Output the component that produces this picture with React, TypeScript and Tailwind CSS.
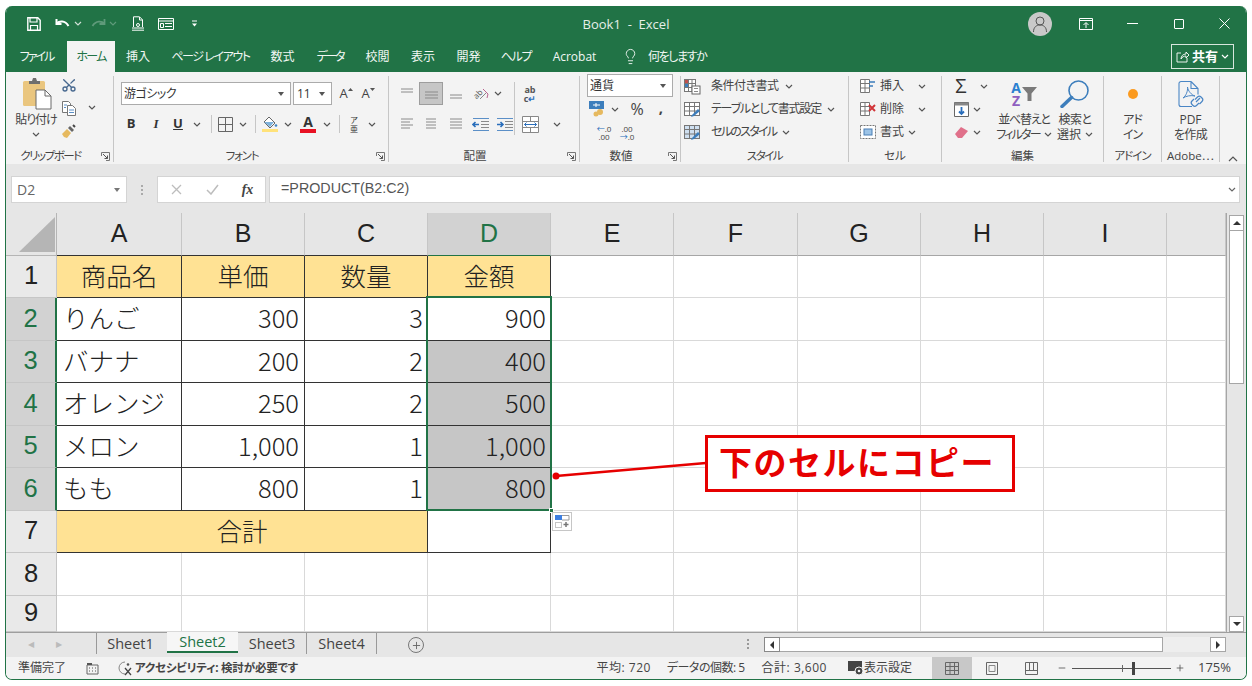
import React from "react";
import { Scissors, Lightbulb, Plus, Minus } from "lucide-react";

const Chev = ({ color = "#555" }: { color?: string }) => (
	<svg width="8" height="5" viewBox="0 0 8 5" className="shrink-0">
		<path d="M1 1l3 3 3-3" fill="none" stroke={color} strokeWidth="1.2" />
	</svg>
);

const Slot = ({ w, children, className = "" }: { w: string; children?: React.ReactNode; className?: string }) => (
	<div className={`flex items-center justify-center shrink-0 ${w} ${className}`}>{children}</div>
);

const Launcher = () => (
	<svg width="9" height="9" viewBox="0 0 9 9" className="shrink-0">
		<path d="M.5 4V.5H8.5V8.5H5" fill="none" stroke="#777" />
		<path d="M2 2l4.5 4.5M6.5 3.5v3h-3" fill="none" stroke="#555" />
	</svg>
);

const Group = ({
	w,
	label,
	launcher,
	track = "",
	children,
}: {
	w: string;
	label: string;
	launcher?: boolean;
	track?: string;
	children: React.ReactNode;
}) => (
	<div className={`flex flex-col h-[86px] mt-[4px] border-r border-[#c6c6c6] shrink-0 ${w}`}>
		<div className="h-[73px]">{children}</div>
		<div className="h-[13px] pt-[1px] flex items-center text-[11.5px] leading-[12px] text-[#444]">
			<div className={`flex-1 text-center whitespace-nowrap ${track}`}>{label}</div>
			{launcher && (
				<div className="w-[18px] flex justify-center pl-[2px]">
					<Launcher />
				</div>
			)}
		</div>
	</div>
);

const Lines = ({ ys, x1 = 2, x2 = 14, blue }: { ys: number[]; x1?: number; x2?: number; blue?: boolean }) => (
	<svg width="16" height="14" viewBox="0 0 16 14">
		{ys.map((y, i) => (
			<path key={i} d={`M${x1} ${y}H${i % 2 && x2 === 14 && blue ? 11 : x2}`} stroke="#8a8a8a" strokeWidth="1" />
		))}
	</svg>
);

const Indent = ({ flip }: { flip?: boolean }) => (
	<svg width="18" height="15" viewBox="0 0 18 15">
		<path d="M1 1.5H17M1 13.5H17" stroke="#5b8fc7" />
		<path d="M9 4.5H17M9 7.5H17M9 10.5H17" stroke="#8a8a8a" />
		<path d={flip ? "M1 7.5H7M4.5 5l2.5 2.5L4.5 10" : "M7 7.5H1M3.5 5L1 7.5 3.5 10"} fill="none" stroke="#2a6ebb" strokeWidth="1.6" />
	</svg>
);

const Paste = () => (
	<svg width="32" height="33" viewBox="0 0 32 33">
		<rect x="1" y="4" width="22" height="25" rx="1.5" fill="#eac67f" />
		<path d="M7 4h3l1-3h3l1 3h3v3H7z" fill="#6e6e6e" />
		<path d="M14 13h9l6 6v13H14z" fill="#fff" stroke="#6a6a6a" />
		<path d="M23 13v6h6" fill="none" stroke="#6a6a6a" />
	</svg>
);

const CopyIcon = () => (
	<svg width="16" height="17" viewBox="0 0 16 17">
		<path d="M1.5 1.5h6l2 2v9h-8z" fill="#fff" stroke="#777" />
		<path d="M6.5 5.5h5l3 3v7h-8z" fill="#fff" stroke="#777" />
		<path d="M3 5h3M3 7.5h2M8 10h5M8 12.5h5" stroke="#5b8fc7" />
	</svg>
);

const Brush = () => (
	<svg width="16" height="16" viewBox="0 0 16 16">
		<path d="M1 11l5-5 4 4-4 5-3-1z" fill="#e6b95f" />
		<path d="M7 5l2-2 4 4-2 2z" fill="#666" />
		<path d="M12 2l2 2" stroke="#444" strokeWidth="2" />
	</svg>
);

const Bucket = () => (
	<div className="flex flex-col items-center">
		<svg width="16" height="13" viewBox="0 0 16 13">
			<path d="M7 1l6 6-5 5-6-6z" fill="#fff" stroke="#666" />
			<path d="M2 6h10l-4 5z" fill="#7fb2dc" />
			<circle cx="14" cy="9.5" r="1.3" fill="#3f87c6" />
		</svg>
		<div className="w-[16px] h-[3px] bg-[#ffe27a]" />
	</div>
);

const SmallTable = ({ tint = "#fff" }: { tint?: string }) => (
	<svg width="18" height="16" viewBox="0 0 18 16">
		<rect x="1.5" y="1.5" width="15" height="13" fill={tint} stroke="#777" />
		<path d="M1.5 5.5h15M1.5 10h15M6.5 1.5v13M11.5 1.5v13" stroke="#777" />
		<path d="M9 14l6-6 2 2-6 5-3 1z" fill="#3d7ebc" />
	</svg>
);

const Cond = () => (
	<svg width="18" height="17" viewBox="0 0 18 17">
		<rect x="1.5" y="1.5" width="11" height="12" fill="#fff" stroke="#777" />
		<path d="M1.5 5.5h11M1.5 9.5h11M5.5 1.5v12M9 1.5v12" stroke="#777" />
		<rect x="2" y="2" width="3" height="3" fill="#c0504d" />
		<rect x="2" y="6" width="3" height="3" fill="#3d7ebc" />
		<rect x="9" y="8" width="8" height="8" fill="#fff" stroke="#666" />
		<path d="M11 10.5h4M11 13.5h4" stroke="#888" />
	</svg>
);

const CellOp = ({ kind }: { kind: "ins" | "del" | "fmt" }) => (
	<svg width="18" height="16" viewBox="0 0 18 16">
		{kind === "fmt" ? (
			<>
				<rect x="1.5" y="1.5" width="15" height="13" fill="#fff" stroke="#777" strokeDasharray="2 1" />
				<rect x="5" y="5" width="8" height="6" fill="#9cc3e6" stroke="#4a7fb5" />
			</>
		) : (
			<>
				<path d="M1.5 1.5h9v13h-9zM1.5 5.5h9M1.5 10h9M6 1.5v13" fill="#fff" stroke="#777" />
				{kind === "ins" ? (
					<path d="M10 4h6M10 8h4" stroke="#3d7ebc" strokeWidth="1.5" />
				) : (
					<path d="M10 4l6 6M16 4l-6 6" stroke="#d13438" strokeWidth="2" />
				)}
			</>
		)}
	</svg>
);

const Row = ({ children, className = "" }: { children: React.ReactNode; className?: string }) => (
	<div className={`flex items-center h-[20px] ${className}`}>{children}</div>
);

const Ribbon = () => (
	<div className="flex h-[92px] bg-[#f3f3f3] text-[12px] text-[#444] shrink-0">
		{/* clipboard */}
		<Group w="w-[108px]" label="クリップボード" launcher track="tracking-[-1.5px]">
			<div className="flex">
				<div className="w-[48px] ml-[6px] flex flex-col items-center">
					<div className="h-[36px] pt-[1px] pl-[4px]">
						<Paste />
					</div>
					<div className="leading-[15px] whitespace-nowrap tracking-[-1px]">貼り付け</div>
					<div className="h-[15px] flex items-center">
						<Chev />
					</div>
				</div>
				<div className="w-[16px] ml-[1px] flex flex-col gap-[5px]">
					<div className="h-[18px] flex items-center justify-center">
						<Scissors size={16} color="#47688f" className="-rotate-90" />
					</div>
					<div className="h-[18px] flex items-center justify-center">
						<CopyIcon />
					</div>
					<div className="h-[18px] flex items-center justify-center">
						<Brush />
					</div>
				</div>
				<div className="ml-[11px] mt-[29px]">
					<Chev />
				</div>
			</div>
		</Group>
		{/* font */}
		<Group w="w-[275px]" label="フォント" launcher track="tracking-[-1.2px]">
			<div className="pl-[7px] pt-[6px]">
				<div className="flex items-center h-[23px]">
					<div className="w-[170px] h-[23px] bg-white border border-[#ababab] flex items-center justify-between px-[2px] pr-[6px] text-[12px] text-[#333]">
						<span className="tracking-[-.5px]">游ゴシック</span>
						<svg width="6" height="4" viewBox="0 0 6 4">
							<path d="M0 0h6L3 4z" fill="#555" />
						</svg>
					</div>
					<div className="w-[39px] h-[23px] ml-[2px] bg-white border border-[#ababab] flex items-center justify-between px-[3px] pr-[6px] text-[#333]">
						11
						<svg width="6" height="4" viewBox="0 0 6 4">
							<path d="M0 0h6L3 4z" fill="#555" />
						</svg>
					</div>
					<Slot w="w-[22px] ml-[3px]">
						<span className="text-[13px]">A</span>
						<svg width="5" height="3" viewBox="0 0 5 3" className="-mt-[9px]">
							<path d="M0 3h5L2.500 0z" fill="#555" />
						</svg>
					</Slot>
					<Slot w="w-[22px]">
						<span className="text-[13px]">A</span>
						<svg width="5" height="3" viewBox="0 0 5 3" className="-mt-[9px]">
							<path d="M0 0h5L2.500 3z" fill="#555" />
						</svg>
					</Slot>
				</div>
				<div className="flex items-center h-[22px] mt-[8px] text-[#333]">
					<Slot w="w-[20px]" className="font-bold text-[13px]">B</Slot>
					<Slot w="w-[30px]" className="italic font-bold text-[13px] font-['Liberation_Serif',serif]">I</Slot>
					<Slot w="w-[14px]" className="font-bold text-[13px] underline">U</Slot>
					<Slot w="w-[24px]"><Chev /></Slot>
					<Slot w="w-[4px]"><div className="w-px h-[18px] bg-[#c6c6c6]" /></Slot>
					<Slot w="w-[24px]">
						<svg width="15" height="15" viewBox="0 0 15 15">
							<path d="M.5.5h14v14H.5zM7.5.5v14M.5 7.5h14" fill="none" stroke="#666" />
						</svg>
					</Slot>
					<Slot w="w-[12px]"><Chev /></Slot>
					<Slot w="w-[12px]"><div className="w-px h-[18px] bg-[#c6c6c6]" /></Slot>
					<Slot w="w-[18px]"><Bucket /></Slot>
					<Slot w="w-[18px]"><Chev /></Slot>
					<Slot w="w-[22px]">
						<div className="flex flex-col items-center leading-[12px]">
							<span className="text-[14px] font-bold text-[#333]">A</span>
							<div className="w-[16px] h-[4px] mt-[1px] bg-[#e81123]" />
						</div>
					</Slot>
					<Slot w="w-[16px]"><Chev /></Slot>
					<Slot w="w-[8px]"><div className="w-px h-[18px] bg-[#c6c6c6]" /></Slot>
					<Slot w="w-[22px]">
						<div className="flex flex-col items-center text-[8px] leading-[9px]">
							<span>ア</span>
							<span>亜</span>
						</div>
					</Slot>
					<Slot w="w-[14px]"><Chev /></Slot>
				</div>
			</div>
		</Group>
		{/* alignment */}
		<Group w="w-[191px]" label="配置" launcher>
			<div className="flex pt-[6px]">
				<div className="pl-[6px] w-[128px]">
					<div className="flex items-center h-[23px]">
						<Slot w="w-[24px]"><Lines ys={[2, 5]} /></Slot>
						<Slot w="w-[24px] h-[23px] bg-[#c6c6c6] border border-[#9d9d9d]"><Lines ys={[5, 8, 11]} x2={15} /></Slot>
						<Slot w="w-[25px]"><Lines ys={[8, 11]} /></Slot>
						<Slot w="w-[26px]" className="gap-0">
							<span className="text-[8px] leading-[10px] -rotate-45 -mr-[3px] text-[#555]">ab</span>
							<svg width="10" height="14" viewBox="0 0 10 14">
								<path d="M1 12L8 5" stroke="#888" />
								<path d="M4 2l5 5-1 4" fill="none" stroke="#b9648f" />
							</svg>
						</Slot>
						<Slot w="w-[8px]"><Chev /></Slot>
					</div>
					<div className="flex items-center h-[22px] mt-[8px]">
						<Slot w="w-[24px]"><Lines ys={[2, 5, 8, 11]} x2={14} blue /></Slot>
						<Slot w="w-[24px]"><Lines ys={[2, 5, 8, 11]} x1={3} x2={13} /></Slot>
						<Slot w="w-[25px]"><Lines ys={[2, 5, 8, 11]} x1={2} x2={14} /></Slot>
						<Slot w="w-[25px]"><Indent /></Slot>
						<Slot w="w-[24px]"><Indent flip /></Slot>
					</div>
				</div>
				<div className="border-l border-[#c6c6c6] h-[53px] ml-[-3px]">
					<div className="flex items-center h-[23px] pl-[7px] text-[9px] leading-[9px] font-bold text-[#555]">
						<div className="w-[16px] text-center">
							ab
							<br />
							c<span className="text-[#2a6ebb]">↵</span>
						</div>
					</div>
					<div className="flex items-center h-[22px] mt-[8px] pl-[7px]">
						<svg width="17" height="17" viewBox="0 0 17 17">
							<path d="M.5.5h16v16H.5zM.5 5.5h16M.5 11.5h16M8.500.5v5M8.500 11.500v5" fill="#fff" stroke="#888" />
							<rect x="1" y="6" width="15" height="5" fill="#fff" />
							<path d="M2.500 8.500h12M4.500 6.500l-2 2 2 2M12.500 6.500l2 2-2 2" fill="none" stroke="#2a6ebb" />
						</svg>
						<div className="ml-[14px]">
							<Chev />
						</div>
					</div>
				</div>
			</div>
		</Group>
		{/* number */}
		<Group w="w-[101px]" label="数値" launcher>
			<div className="pl-[7px] -mt-[2px]">
				<div className="w-[86px] h-[23px] bg-white border border-[#ababab] flex items-center justify-between pl-[2px] pr-[6px] text-[#333]">
					通貨
					<svg width="6" height="4" viewBox="0 0 6 4">
						<path d="M0 0h6L3 4z" fill="#555" />
					</svg>
				</div>
				<Row className="mt-[2px]">
					<Slot w="w-[20px]">
						<svg width="17" height="16" viewBox="0 0 17 16">
							<rect x="0" y="0" width="15" height="8" fill="#3d7ebc" />
							<path d="M4 4h7M7 2v4" stroke="#fff" />
							<circle cx="11" cy="11" r="3" fill="#e6b95f" />
							<circle cx="7" cy="13" r="2.500" fill="#e6b95f" />
						</svg>
					</Slot>
					<Slot w="w-[16px]"><Chev /></Slot>
					<Slot w="w-[28px]" className="text-[16px]">%</Slot>
					<Slot w="w-[20px]" className="font-bold text-[15px] -mt-[4px]">,</Slot>
				</Row>
				<Row className="mt-[4px] pl-[6px] text-[8px] leading-[8px]">
					<Slot w="w-[22px]">
						<div className="text-center">
							<span className="text-[#2a6ebb]">←</span>.0
							<br />
							.00
						</div>
					</Slot>
					<Slot w="w-[24px]">
						<div className="text-center">
							.00
							<br />
							<span className="text-[#2a6ebb]">→</span>.0
						</div>
					</Slot>
				</Row>
			</div>
		</Group>
		{/* styles */}
		<Group w="w-[168px]" label="スタイル" track="tracking-[-1.5px]">
			<div className="flex flex-col gap-[3px] text-[12px]">
				<Row>
					<Slot w="w-[22px]"><Cond /></Slot>
					<span className="ml-[8px] mr-[6px] tracking-[-.5px]">条件付き書式</span>
					<Chev />
				</Row>
				<Row>
					<Slot w="w-[22px]"><SmallTable /></Slot>
					<span className="ml-[8px] mr-[6px] whitespace-nowrap tracking-[-1.2px]">テーブルとして書式設定</span>
					<Chev />
				</Row>
				<Row>
					<Slot w="w-[22px]"><SmallTable tint="#cfe0f1" /></Slot>
					<span className="ml-[8px] mr-[6px] tracking-[-1.7px]">セルのスタイル</span>
					<Chev />
				</Row>
			</div>
		</Group>
		{/* cells */}
		<Group w="w-[93px]" label="セル">
			<div className="flex flex-col gap-[3px] pl-[9px]">
				<Row>
					<Slot w="w-[20px]"><CellOp kind="ins" /></Slot>
					<span className="ml-[2px] w-[38px]">挿入</span>
					<Chev />
				</Row>
				<Row>
					<Slot w="w-[20px]"><CellOp kind="del" /></Slot>
					<span className="ml-[2px] w-[38px]">削除</span>
					<Chev />
				</Row>
				<Row>
					<Slot w="w-[20px]"><CellOp kind="fmt" /></Slot>
					<span className="ml-[2px] w-[28px]">書式</span>
					<Chev />
				</Row>
			</div>
		</Group>
		{/* editing */}
		<Group w="w-[162px]" label="編集">
			<div className="flex pl-[10px]">
				<div className="w-[43px] flex flex-col gap-[3px]">
					<Row>
						<Slot w="w-[18px]" className="text-[20px] text-[#333]">Σ</Slot>
						<div className="ml-[10px]"><Chev /></div>
					</Row>
					<Row>
						<Slot w="w-[18px]">
							<svg width="15" height="15" viewBox="0 0 15 15">
								<path d="M.5.5h14v14H.5z" fill="#fff" stroke="#666" />
								<path d="M.5.5h14v3H.5z" fill="#888" />
								<path d="M7.500 5v7M5 9.500l2.500 2.500L10 9.500" fill="none" stroke="#2a6ebb" strokeWidth="1.8" />
							</svg>
						</Slot>
						<div className="ml-[3px]"><Chev /></div>
					</Row>
					<Row>
						<Slot w="w-[18px]">
							<svg width="15" height="13" viewBox="0 0 15 13">
								<path d="M1 8l6-7 7 4-6 7H4z" fill="#e0708a" />
							</svg>
						</Slot>
						<div className="ml-[3px]"><Chev /></div>
					</Row>
				</div>
				<div className="w-[58px] flex flex-col items-center">
					<div className="h-[36px] flex items-center text-[14px] leading-[13px] font-bold">
						<div className="flex flex-col items-center">
							<span className="text-[#2a7fd0]">A</span>
							<span className="text-[#8f5fc0]">Z</span>
						</div>
						<svg width="15" height="14" viewBox="0 0 15 14" className="ml-[1px]">
							<path d="M0 0h15L9.500 6.500V14h-4V6.500z" fill="#7a7a7a" />
						</svg>
					</div>
					<div className="leading-[15px] whitespace-nowrap tracking-[-1.2px]">並べ替えと</div>
					<div className="leading-[15px] whitespace-nowrap flex items-center gap-[4px]">
						<span className="tracking-[-1.8px]">フィルター</span>
						<Chev />
					</div>
				</div>
				<div className="w-[44px] flex flex-col items-center">
					<div className="h-[36px] flex items-center">
						<svg width="30" height="28" viewBox="0 0 30 28">
							<circle cx="18.500" cy="10.500" r="9.500" fill="none" stroke="#3d7ebc" strokeWidth="1.6" />
							<path d="M11.500 17.500L2 26.500" stroke="#3d7ebc" strokeWidth="3.500" strokeLinecap="round" />
						</svg>
					</div>
					<div className="leading-[15px] whitespace-nowrap tracking-[-.6px]">検索と</div>
					<div className="leading-[15px] whitespace-nowrap flex items-center gap-[4px]">選択<Chev /></div>
				</div>
			</div>
		</Group>
		{/* add-ins */}
		<Group w="w-[58px]" label="アドイン" track="tracking-[-1px]">
			<div className="flex flex-col items-center">
				<div className="h-[36px] flex items-center">
					<div className="w-[10px] h-[10px] rounded-full bg-[#fb9a1f]" />
				</div>
				<div className="leading-[15px] tracking-[-1px]">アド</div>
				<div className="leading-[15px] tracking-[-1px]">イン</div>
			</div>
		</Group>
		{/* adobe */}
		<Group w="w-[58px]" label="Adobe⋯">
			<div className="flex flex-col items-center">
				<div className="h-[36px] flex items-center pt-[1px]">
					<svg width="28" height="30" viewBox="0 0 28 30">
						<path d="M14 1.500H4a2 2 0 0 0-2 2v21a2 2 0 0 0 2 2h11M14 1.500l7 7v6M14 1.500v7h7" fill="none" stroke="#4a86c5" strokeWidth="1.1" />
						<path d="M6 18c3-2 5-7 4.500-11 .5 4 4 8 7.500 9-4-1-9 0-12 2z" fill="none" stroke="#4a86c5" />
						<path d="M19 22l4-4M18 19.500l2.500-2.500a2.500 2.500 0 0 1 3.500 0l1 1a2.500 2.500 0 0 1 0 3.500L22.500 24M22 23l-2.500 2.500a2.500 2.500 0 0 1-3.500 0l-1-1a2.500 2.500 0 0 1 0-3.500L17 19" fill="none" stroke="#4a86c5" strokeWidth="1.2" />
					</svg>
				</div>
				<div className="leading-[15px]">PDF</div>
				<div className="leading-[15px] tracking-[-.6px]">を作成</div>
			</div>
		</Group>
		<div className="flex-1 flex items-end justify-center pb-[2px]">
			<svg width="10" height="6" viewBox="0 0 10 6">
				<path d="M1 5l4-4 4 4" fill="none" stroke="#555" strokeWidth="1.2" />
			</svg>
		</div>
	</div>
);

const FormulaBar = () => (
	<div className="flex h-[49px] bg-[#e6e6e6] pt-[12px] pl-[5px] shrink-0 text-[#666]">
		<div className="w-[116px] h-[27px] bg-white border border-[#d4d4d4] flex items-center justify-between pl-[5px] pr-[6px] text-[14px]">
			D2
			<svg width="6" height="4" viewBox="0 0 6 4">
				<path d="M0 0h6L3 4z" fill="#777" />
			</svg>
		</div>
		<div className="w-[30px] flex items-center justify-center h-[27px]">
			<div className="flex flex-col gap-[2px]">
				<div className="w-[2px] h-[2px] bg-[#aaa]" />
				<div className="w-[2px] h-[2px] bg-[#aaa]" />
				<div className="w-[2px] h-[2px] bg-[#aaa]" />
			</div>
		</div>
		<div className="w-[109px] h-[27px] bg-white border border-[#d4d4d4] flex items-center">
			<Slot w="w-[36px]">
				<svg width="11" height="11" viewBox="0 0 11 11">
					<path d="M1 1l9 9M10 1l-9 9" stroke="#bdbdbd" strokeWidth="1.3" />
				</svg>
			</Slot>
			<Slot w="w-[36px]">
				<svg width="13" height="11" viewBox="0 0 13 11">
					<path d="M1 6l4 4 7-9" fill="none" stroke="#bdbdbd" strokeWidth="1.5" />
				</svg>
			</Slot>
			<Slot w="w-[35px]" className="italic text-[14px] text-[#444] font-['Liberation_Serif',serif] font-bold">fx</Slot>
		</div>
		<div className="w-[971px] h-[27px] ml-[3px] bg-white border border-[#d4d4d4] flex items-center justify-between pl-[11px] pr-[3px] font-['Liberation_Sans',sans-serif] text-[14.3px] text-[#555]">
			<span className="-mt-[1px]">=PRODUCT(B2:C2)</span>
			<Chev color="#666" />
		</div>
	</div>
);

const COLS = ["A", "B", "C", "D", "E", "F", "G", "H", "I", ""];
const COL_W = [
	"w-[125px]",
	"w-[123px]",
	"w-[123px]",
	"w-[123px]",
	"w-[123px]",
	"w-[124px]",
	"w-[123px]",
	"w-[123px]",
	"w-[123px]",
	"w-[59px]",
];
const ROW_H = [
	"h-[42px]",
	"h-[43px]",
	"h-[42px]",
	"h-[43px]",
	"h-[42px]",
	"h-[43px]",
	"h-[42px]",
	"h-[43px]",
	"h-[36px]",
];
const TITLES = ["商品名", "単価", "数量", "金額"];
const DATA = [
	["りんご", "300", "3", "900"],
	["バナナ", "200", "2", "400"],
	["オレンジ", "250", "2", "500"],
	["メロン", "1,000", "1", "1,000"],
	["もも", "800", "1", "800"],
];
const NUM_PAD = ["pl-[6px] justify-start", "pr-[5px] justify-end", "pr-[4px] justify-end", "pr-[4px] justify-end"];

const Cell = ({ r, c }: { r: number; c: number }) => {
	const w = COL_W[c];
	const base = `${w} shrink-0 flex items-center border-r border-b pb-[3px]`;
	if (r === 0 && c < 4) return <div className={`${base} justify-center bg-[#ffe294] border-[#333]`}>{TITLES[c]}</div>;
	if (r >= 1 && r <= 5 && c < 4)
		return (
			<div className={`${base} border-[#333] ${NUM_PAD[c]} ${c === 3 && r > 1 ? "bg-[#c6c6c6]" : "bg-white"}`}>
				{DATA[r - 1][c]}
			</div>
		);
	if (r === 6 && c === 0)
		return (
			<div className="w-[371px] shrink-0 flex items-center justify-center pb-[3px] border-r border-b border-[#333] bg-[#ffe294]">
				合計
			</div>
		);
	if (r === 6 && (c === 1 || c === 2)) return null;
	if (r === 6 && c === 3) return <div className={`${base} border-[#333] bg-white`} />;
	return <div className={`${base} border-[#d9d9d9] bg-white`} />;
};

const Sheet = () => (
	<div className="flex h-[419px] shrink-0 bg-[#e6e6e6]">
		<div className="w-[1220px] shrink-0 font-['Noto_Sans_CJK_JP',sans-serif] [font-feature-settings:normal] font-light text-[25.5px] text-[#222]">
			<div className="flex h-[43px]">
				<div className="w-[51px] shrink-0 border-r border-b border-[#b5b5b5] pt-[4px] pl-[13px]">
					<svg width="36" height="35" viewBox="0 0 36 35">
						<path d="M36 0v35H0z" fill="#b5b5b5" />
					</svg>
				</div>
				{COLS.map((c, i) => (
					<div
						key={i}
						className={`${COL_W[i]} shrink-0 flex items-center justify-center border-r border-b border-r-[#c6c6c6] font-['Liberation_Sans',sans-serif] font-normal text-[25px] ${
							i === 3 ? "bg-[#d2d2d2] text-[#217346] border-b-[#217346]" : "text-[#222]"
						} ${i < 3 ? "border-b-[#333]" : ""} ${i > 3 ? "border-b-[#a6a6a6]" : ""}`}>
						{c}
					</div>
				))}
			</div>
			{ROW_H.map((h, r) => (
				<div key={r} className={`flex ${h}`}>
					<div
						className={`w-[51px] shrink-0 flex items-center justify-center pb-[2px] border-b border-[#c6c6c6] font-['Liberation_Sans',sans-serif] font-normal ${
							r >= 1 && r <= 5
								? "bg-[#d2d2d2] text-[#217346] border-r-2 border-r-[#217346]"
								: "bg-[#e9e9e9] border-r border-r-[#c6c6c6]"
						}`}>
						{r + 1}
					</div>
					{COLS.map((_, c) => (
						<Cell key={c} r={r} c={c} />
					))}
				</div>
			))}
		</div>
		<div className="flex-1 pl-[2px] pr-[2px] pt-[2px] flex flex-col border-l border-[#a6a6a6]">
			<div className="h-[16px] bg-white border border-[#a6a6a6] flex items-center justify-center">
				<svg width="8" height="4" viewBox="0 0 8 4">
					<path d="M0 4h8L4 0z" fill="#333" />
				</svg>
			</div>
			<div className="h-[153px] bg-white border border-t-0 border-[#a6a6a6]" />
			<div className="flex-1" />
			<div className="h-[16px] bg-white border border-[#a6a6a6] flex items-center justify-center">
				<svg width="8" height="4" viewBox="0 0 8 4">
					<path d="M0 0h8L4 4z" fill="#333" />
				</svg>
			</div>
		</div>
	</div>
);

const TabsBar = () => (
	<div className="flex items-start h-[25px] bg-[#e6e6e6] border-t border-[#9e9e9e] shrink-0 font-['Open_Sans',sans-serif] text-[14.5px] text-[#444]">
		<div className="w-[90px] h-[21px] flex items-center text-[#bbb] text-[8px] pl-[22px] gap-[22px]">
			<span>◀</span>
			<span>▶</span>
		</div>
		<div className="h-[21px] flex items-center border-l border-[#999]">
			<div className="w-[70px] pr-[3px] text-center">Sheet1</div>
		</div>
		<div className="h-[21px] w-[71px] -mt-px pt-px flex items-center justify-center bg-[#f6f6f6] border-b-2 border-[#217346] text-[#217346]">
			Sheet2
		</div>
		<div className="h-[21px] w-[69px] flex items-center justify-center border-r border-[#999]">Sheet3</div>
		<div className="h-[21px] w-[70px] flex items-center justify-center border-r border-[#999]">Sheet4</div>
		<div className="ml-[31px] mt-[4px] w-[16px] h-[16px] rounded-full border border-[#777] flex items-center justify-center">
			<Plus size={11} color="#666" />
		</div>
		<div className="ml-[323px] mt-[6px] flex flex-col gap-[2px]">
			<div className="w-[2px] h-[2px] bg-[#999]" />
			<div className="w-[2px] h-[2px] bg-[#999]" />
			<div className="w-[2px] h-[2px] bg-[#999]" />
		</div>
		<div className="ml-[15px] mt-[4px] flex h-[15px]">
			<div className="w-[16px] bg-white border border-[#888] flex items-center justify-center">
				<svg width="4" height="8" viewBox="0 0 4 8">
					<path d="M4 0v8L0 4z" fill="#333" />
				</svg>
			</div>
			<div className="w-[383px] bg-white border-y border-r border-[#a6a6a6]" />
			<div className="w-[47px] bg-[#eeeeee]" />
			<div className="w-[16px] bg-white border border-[#a6a6a6] flex items-center justify-center">
				<svg width="4" height="8" viewBox="0 0 4 8">
					<path d="M0 0v8l4-4z" fill="#333" />
				</svg>
			</div>
		</div>
	</div>
);

const StatusBar = () => (
	<div className="flex items-center flex-1 bg-[#f3f3f3] text-[12px] text-[#444] pl-[12px] pr-[15px]">
		<span>準備完了</span>
		<svg width="13" height="13" viewBox="0 0 13 13" className="ml-[20px]">
			<path d="M1 3h11v9H1z" fill="none" stroke="#666" />
			<path d="M1 1h5v2H1z" fill="#555" />
			<path d="M3 6h1M6 6h1M9 6h1M3 9h1M6 9h1M9 9h1" stroke="#555" />
		</svg>
		<svg width="17" height="15" viewBox="0 0 17 15" className="ml-[18px]">
			<path d="M8 1a6 6 0 1 0 0 12" fill="none" stroke="#888" />
			<path d="M8 7l6 7M14 7l-6 7" stroke="#444" strokeWidth="1.3" />
			<circle cx="11" cy="3.500" r="1.300" fill="#555" />
		</svg>
		<span className="font-bold text-[11.5px] ml-[1px] whitespace-nowrap tracking-[-.2px]">アクセシビリティ: 検討が必要です</span>
		<div className="ml-auto flex items-center h-full">
			<span className="whitespace-nowrap tracking-[.5px]">平均: 720</span>
			<span className="ml-[16px] whitespace-nowrap tracking-[-.5px]">データの個数: 5</span>
			<span className="ml-[17px] whitespace-nowrap tracking-[.5px]">合計: 3,600</span>
			<svg width="16" height="15" viewBox="0 0 16 15" className="ml-[21px]">
				<rect x="0" y="0" width="14" height="10" fill="#444" />
				<circle cx="11" cy="10" r="4" fill="#444" stroke="#f3f3f3" />
				<circle cx="11" cy="10" r="1.300" fill="#f3f3f3" />
			</svg>
			<span className="whitespace-nowrap">表示設定</span>
			<Slot w="w-[40px] h-full ml-[20px] bg-[#c8c8c8]">
				<svg width="14" height="13" viewBox="0 0 14 13">
					<path d="M.5.5h13v12H.5zM.5 4.500h13M.5 8.500h13M5 .5v12M9.500.5v12" fill="none" stroke="#666" />
				</svg>
			</Slot>
			<Slot w="w-[40px] h-full">
				<svg width="12" height="13" viewBox="0 0 12 13">
					<path d="M.5.5h11v12H.5z" fill="none" stroke="#666" />
					<path d="M3 3.500h6v6H3z" fill="none" stroke="#888" />
				</svg>
			</Slot>
			<Slot w="w-[40px] h-full">
				<svg width="13" height="13" viewBox="0 0 13 13">
					<path d="M.5.5h12v12H.5zM.5 8.500h12M4.500.5v8M8.500.5v8" fill="none" stroke="#666" />
				</svg>
			</Slot>
			<Minus size={10} color="#555" className="ml-[5px]" />
			<div className="relative w-[99px] h-[1px] ml-[5px] bg-[#555]">
				<div className="absolute left-[50px] -top-[3px] w-px h-[7px] bg-[#666]" />
				<div className="absolute left-[60px] -top-[6px] w-[3px] h-[13px] bg-[#444]" />
			</div>
			<Plus size={10} color="#555" className="ml-[4px]" />
			<span className="ml-[13px] text-[13px]">175%</span>
		</div>
	</div>
);

const TitleBar = () => (
	<div className="shrink-0 h-[66px] bg-[#217346] text-white">
		<div className="grid grid-cols-[1fr_auto_1fr] h-[35px] items-center">
			<div className="flex items-center pl-[20px]">
				<Slot w="w-[16px]">
					<svg width="14" height="14" viewBox="0 0 14 14">
						<path d="M.8.8h10l2.400 2.400v10H.8z" fill="none" stroke="#fff" strokeWidth="1.4" />
						<path d="M3 1v4h7V1M3.500 13V8.500h7V13" fill="none" stroke="#fff" strokeWidth="1.2" />
					</svg>
				</Slot>
				<Slot w="w-[18px] ml-[11px]">
					<svg width="15" height="12" viewBox="0 0 15 12">
						<path d="M1.500 1v5h5M1.800 5.600C4 3 10 2 13.500 8" fill="none" stroke="#fff" strokeWidth="2" />
					</svg>
				</Slot>
				<Slot w="w-[8px] ml-[3px]"><Chev color="#d0e0d6" /></Slot>
				<Slot w="w-[18px] ml-[7px]">
					<svg width="15" height="12" viewBox="0 0 15 12">
						<path d="M13.500 1v5h-5M13.200 5.600C11 3 5 2 1.500 8" fill="none" stroke="#5f9a7a" strokeWidth="1.8" />
					</svg>
				</Slot>
				<Slot w="w-[8px] ml-[2px]"><Chev color="#5f9a7a" /></Slot>
				<Slot w="w-[14px] ml-[14px]">
					<svg width="14" height="15" viewBox="0 0 14 15">
						<path d="M2.500 11V.8h6l3 3V11M8.500 1v3h3" fill="none" stroke="#fff" />
						<path d="M1 14.200h12M1 12h12" stroke="#fff" />
						<circle cx="7" cy="9" r="1.500" fill="none" stroke="#fff" />
					</svg>
				</Slot>
				<Slot w="w-[16px] ml-[13px]">
					<svg width="16" height="14" viewBox="0 0 16 14">
						<path d="M.5 1.500h15v11H.5zM.5 4h15" fill="none" stroke="#fff" />
						<path d="M2.500 6.500h3v4h-3zM7 6.500h7M7 9.500h7" fill="none" stroke="#fff" />
					</svg>
				</Slot>
				<Slot w="w-[8px] ml-[16px]">
					<svg width="7" height="7" viewBox="0 0 7 7">
						<path d="M1 1h5" stroke="#fff" />
						<path d="M1 3.500h5L3.500 6.500z" fill="#fff" />
					</svg>
				</Slot>
			</div>
			<div className="pt-[3px] text-[13px] font-['Open_Sans',sans-serif] text-[#e6efe9] whitespace-pre">Book1  -  Excel</div>
			<div className="flex items-center justify-end">
				<div className="w-[24px] h-[24px] rounded-full bg-[#c9c9c9] flex items-center justify-center">
					<svg width="16" height="18" viewBox="0 0 16 18">
						<circle cx="8" cy="6" r="4" fill="none" stroke="#555" />
						<path d="M1.500 17c0-5 3-7 6.500-7s6.500 2 6.500 7" fill="none" stroke="#555" />
					</svg>
				</div>
				<Slot w="w-[46px] ml-[11px]">
					<svg width="14" height="12" viewBox="0 0 14 12">
						<path d="M.5.5h13v11H.5zM.5 2.500h13" fill="none" stroke="#fff" />
						<path d="M7 10V5M4.500 7L7 4.500 9.500 7" fill="none" stroke="#fff" />
					</svg>
				</Slot>
				<Slot w="w-[46px]">
					<div className="w-[11px] h-px bg-white" />
				</Slot>
				<Slot w="w-[47px]">
					<div className="w-[10px] h-[10px] rounded-[1px] border border-white" />
				</Slot>
				<Slot w="w-[44px]">
					<svg width="11" height="11" viewBox="0 0 11 11">
						<path d="M.5.5l10 10M10.500.5l-10 10" stroke="#fff" />
					</svg>
				</Slot>
			</div>
		</div>
		<div className="flex h-[31px] items-end text-[12px] text-[#f2f7f4]">
			<div className="w-[61px] h-[31px] flex items-center justify-center tracking-[-2px]">ファイル</div>
			<div className="w-[48px] h-[31px] flex items-center justify-center bg-[#f3f3f3] text-[#217346] tracking-[-1.700px]">ホーム</div>
			{[
				["w-[46px]", "挿入", ""],
				["w-[99px]", "ページ レイアウト", "tracking-[-1.400px]"],
				["w-[45px]", "数式", ""],
				["w-[50px]", "データ", "tracking-[-2.300px]"],
				["w-[45px]", "校閲", ""],
				["w-[46px]", "表示", ""],
				["w-[45px]", "開発", ""],
				["w-[50px]", "ヘルプ", "tracking-[-1.300px]"],
				["w-[67px]", "Acrobat", ""],
			].map(([w, t, k]) => (
				<div key={t} className={`${w} ${k} h-[31px] flex items-center justify-center whitespace-nowrap`}>
					{t}
				</div>
			))}
			<div className="h-[31px] flex items-center ml-[14px]">
				<Lightbulb size={17} strokeWidth={1.3} />
				<span className="ml-[9px] tracking-[-1.400px]">何をしますか</span>
			</div>
			<div className="ml-auto mr-[12px] mb-[3px] w-[63px] h-[25px] border border-[#d8e6dd] flex items-center justify-center gap-[3px] text-[13px] font-bold text-white">
				<svg width="13" height="12" viewBox="0 0 13 12">
					<path d="M5 2H1v9h10V7M5 8c0-3 2-5 5-5V1l3 3-3 3V5C8 5 6 6 5 8z" fill="none" stroke="#fff" strokeWidth=".9" />
				</svg>
				共有
				<Chev color="#fff" />
			</div>
		</div>
	</div>
);

export default function App() {
	return (
		<div className="relative w-[1252px] h-[686px] bg-white overflow-hidden font-['Open_Sans','Noto_Sans_CJK_JP',sans-serif] [font-feature-settings:'palt']">
			<div className="ml-[5px] mt-[6px] w-[1242px] h-[674px] flex flex-col border-x border-b border-[#217346] rounded-[7px] overflow-hidden">
				<TitleBar />
				<Ribbon />
				<FormulaBar />
				<Sheet />
				<TabsBar />
				<StatusBar />
			</div>

			{/* selection over D2:D6 */}
			<div className="absolute left-[426px] top-[296px] w-[126px] h-[215px] border-2 border-[#217346]" />
			<div className="absolute left-[549px] top-[508px] w-[5px] h-[5px] bg-[#217346] border border-white" />

			{/* paste options */}
			<div className="absolute left-[552px] top-[512px] w-[20px] h-[19px] bg-white border border-[#c6c6c6] flex items-center justify-center">
				<svg width="15" height="13" viewBox="0 0 15 13">
					<rect x="0" y="0" width="7" height="5" fill="#3d7ee0" />
					<path d="M7 .5h7v4.500H7" fill="none" stroke="#999" />
					<path d="M.5 7.500h6v5h-6z" fill="none" stroke="#888" strokeDasharray="1 1" />
					<path d="M11 7v5M8.500 9.500h5" stroke="#777" strokeWidth="1.5" />
				</svg>
			</div>

			{/* callout */}
			<svg width="160" height="24" viewBox="0 0 160 24" className="absolute left-[550px] top-[458px]">
				<path d="M6 18L156 5" stroke="#e60000" strokeWidth="2.500" />
				<circle cx="6" cy="18" r="3.500" fill="#e60000" />
			</svg>
			<div className="absolute left-[705px] top-[435px] w-[310px] h-[57px] bg-white border-[3px] border-[#e60000] flex items-center pl-[11px] pb-[4px] text-[33px] tracking-[1.500px] font-bold text-[#e60000] font-['Noto_Sans_CJK_JP',sans-serif] [font-feature-settings:normal] whitespace-nowrap">
				下のセルにコピー
			</div>
		</div>
	);
}
